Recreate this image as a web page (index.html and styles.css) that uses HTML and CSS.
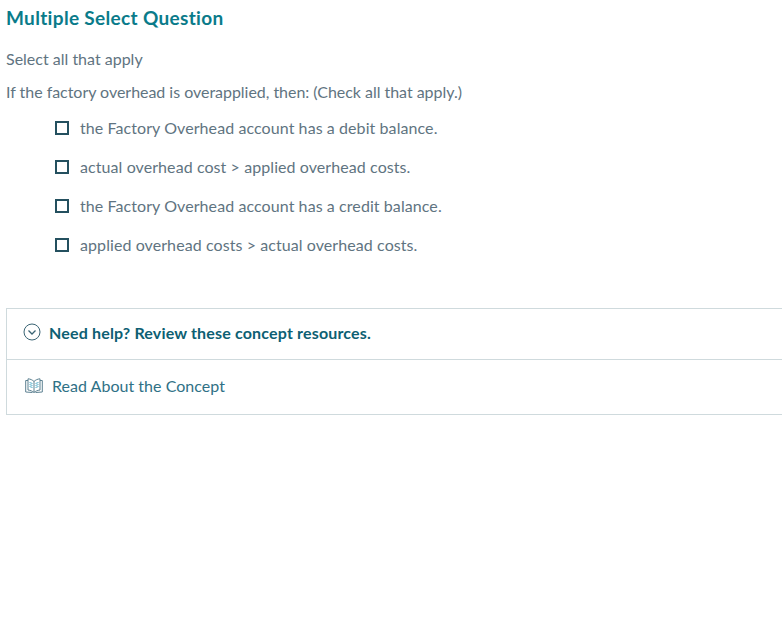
FILE: index.html
```html
<!DOCTYPE html>
<html lang="en">
<head>
<meta charset="utf-8">
<title>Multiple Select Question</title>
<link rel="stylesheet" href="styles.css">
</head>
<body>
<main class="page">
  <h1 class="title">Multiple Select Question</h1>
  <p class="hint">Select all that apply</p>
  <p class="prompt">If the factory overhead is overapplied, then: (Check all that apply.)</p>
  <ul class="choices">
    <li class="choice"><span class="box"></span><span>the Factory Overhead account has a debit balance.</span></li>
    <li class="choice"><span class="box"></span><span>actual overhead cost &gt; applied overhead costs.</span></li>
    <li class="choice"><span class="box"></span><span>the Factory Overhead account has a credit balance.</span></li>
    <li class="choice"><span class="box"></span><span>applied overhead costs &gt; actual overhead costs.</span></li>
  </ul>
  <section class="help">
    <div class="help-head">
      <svg class="icon-chevron" width="18" height="18" viewBox="0 0 18 18" fill="none" stroke="#3a6474" stroke-width="1"><circle cx="9" cy="9" r="8"/><path d="M5.500 7.500 9 11l3.500-3.500" stroke-width="1.300"/></svg>
      <strong>Need help? Review these concept resources.</strong>
    </div>
    <div class="help-row">
      <svg class="icon-book" width="18" height="16" viewBox="0 0 18 16" fill="none" stroke="#5d8191" stroke-width="1"><path d="M9 3.500C7.500 2 5.500 1 3 .8v11.200c2.500.3 4.500 1.200 6 2.500 1.500-1.300 3.500-2.200 6-2.500V.8C12.500 1 10.500 2 9 3.500ZM9 3.500v11"/><path d="M3 2.500H.7v11.500l6.800.5M15 2.500h2.300V14l-6.800.5"/><path d="M4.500 4.500l3 1M4.500 6.500l3 1M4.500 8.500l3 1M13.500 4.500l-3 1M13.500 6.500l-3 1M13.500 8.500l-3 1" stroke="#56b0cc"/></svg>
      <span>Read About the Concept</span>
    </div>
  </section>
</main>
</body>
</html>
```
FILE: styles.css
```css
* { box-sizing: border-box; }
html, body { margin: 0; background: #fff; }
body {
  font-family: "Lato", "Open Sans", sans-serif;
  font-size: 16px;
  font-variant-ligatures: none;
  color: #5f7481;
  overflow: hidden;
}
.page { padding: 6px 0 0 6px; width: 782px; height: 631px; }
.title {
  margin: 0;
  font-size: 19px;
  line-height: 23px;
  font-weight: 700;
  letter-spacing: .33px;
  color: #0a7b8a;
}
.hint { margin: 18px 0 0; line-height: 24px; }
.prompt { margin: 9px 0 0; line-height: 24px; letter-spacing: -.03px; }
.choices { list-style: none; margin: 12px 0 0; padding: 0 0 0 49px; display: flex; flex-direction: column; gap: 15px; letter-spacing: .08px; }
.choice { display: flex; align-items: center; gap: 11px; line-height: 24px; }
.box { width: 14px; height: 14px; border: 2px solid #24505f; flex: none; }
.help {
  margin-top: 51px;
  border: 1px solid #cfdadd;
  border-right: 0;
  width: 776px;
}
.help-head {
  height: 51px;
  display: flex;
  align-items: center;
  gap: 8px;
  padding: 0 0 4px 16px;
  border-bottom: 1px solid #cfdadd;
  color: #0d5f73;
  letter-spacing: .17px;
}
.help-row {
  height: 54px;
  display: flex;
  align-items: center;
  gap: 9px;
  padding: 0 0 4px 18px;
  color: #2f7186;
  letter-spacing: .03px;
}
.icon-chevron, .icon-book { flex: none; }
.icon-book { margin-top: 2px; }
```
